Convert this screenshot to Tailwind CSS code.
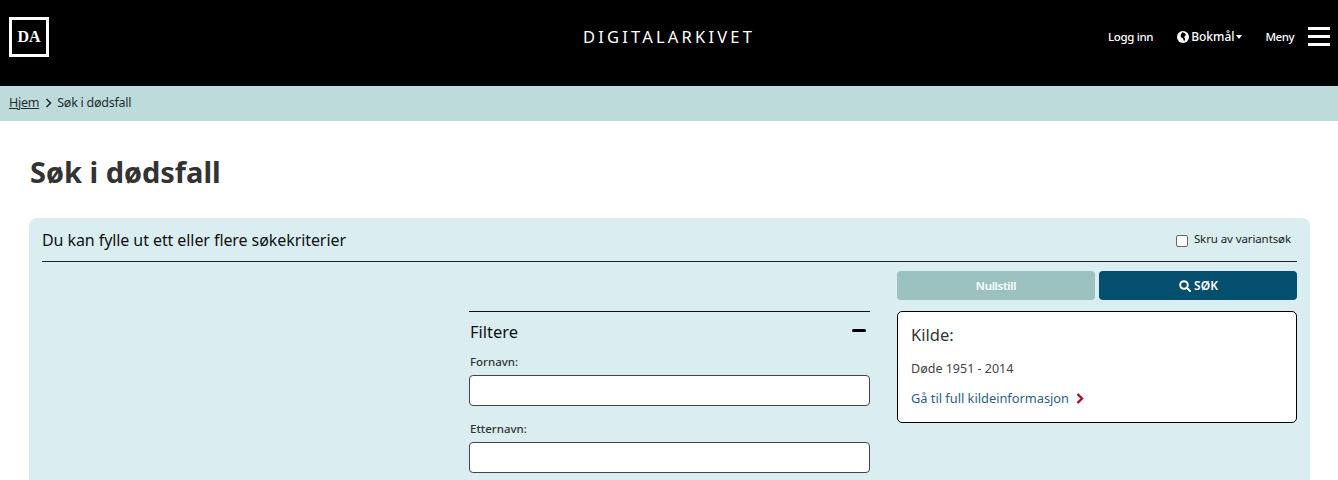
<!DOCTYPE html>
<html lang="nb">
<head>
  <meta charset="utf-8">
  <title>Søk i dødsfall</title>
  <script src="https://cdn.jsdelivr.net/npm/@tailwindcss/browser@4"></script>
</head>
<body class="bg-white font-['Noto_Sans',sans-serif] text-[#333] h-[480px] overflow-hidden">
  <header class="bg-black h-[86px] grid grid-cols-[1fr_auto_1fr] items-center text-white">
    <div class="ml-[9px] mb-[12px] w-[40px] h-[40px] border-[3px] border-white flex items-center justify-center font-['Liberation_Serif',serif] font-bold text-[16px]">DA</div>
    <div class="text-center text-[16.5px] tracking-[3.2px] mb-[11px]">DIGITALARKIVET</div>
    <nav class="flex items-center justify-end text-[12px] mb-[13px] font-medium">
      <a class="mr-[24px] text-[11.5px] tracking-[-0.35px]">Logg inn</a>
      <svg class="w-[12px] h-[12px] mr-[2px]" viewBox="0 0 16 16"><circle cx="8" cy="8" r="8" fill="#fff"/><path d="M7 1.5 10 2.5 12 5 9.5 8 11 10.5 9.5 14 8 10 5 8 5 5Z" fill="#000"/></svg>
      <a>Bokmål</a>
      <span class="ml-[1px] mr-[24px] w-0 h-0 border-x-[3.5px] border-x-transparent border-t-[4px] border-t-white"></span>
      <a class="mr-[14px] text-[11.5px] tracking-[-0.5px]">Meny</a>
      <div class="w-[22px] mr-[8px] flex flex-col gap-[5px]">
        <span class="block h-[3px] bg-white"></span>
        <span class="block h-[3px] bg-white"></span>
        <span class="block h-[3px] bg-white"></span>
      </div>
    </nav>
  </header>

  <div class="bg-[#bddbdb] h-[35px] flex items-center pl-[9px] text-[12.5px] tracking-[-0.25px] text-[#1f2d33]">
    <a class="underline">Hjem</a>
    <svg class="w-[7px] h-[10px] mx-[5.5px] mb-[1px]" viewBox="0 0 7 10" fill="none" stroke="#1f2d33" stroke-width="1.6"><path d="M1.5 1 5.5 5 1.5 9"/></svg>
    <span>Søk i dødsfall</span>
  </div>

  <main class="pl-[29px] pr-[28px]">
    <h1 class="pl-[1px] pt-[31px] h-[97px] text-[29px] leading-[40px] font-bold text-[#333]">Søk i dødsfall</h1>
    <section class="bg-[#daeef1] rounded-t-[8px] h-[262px] px-[13px]">
      <div class="h-[44px] border-b border-[#222] flex items-center justify-between">
        <p class="text-[16px] tracking-[-0.08px] text-[#111]">Du kan fylle ut ett eller flere søkekriterier</p>
        <label class="flex items-start mr-[6px] text-[11.5px] tracking-[-0.1px] text-[#222] mb-[2px]">
          <input type="checkbox" class="w-[12px] h-[12px] mt-[5px] mr-[6px] appearance-none bg-white border border-[#666] rounded-[2px]">
          Skru av variantsøk
        </label>
      </div>
      <div class="grid grid-cols-[400px_401px_400px] gap-x-[27px]">
        <div></div>
        <div class="pt-[49px]">
          <div class="border-t border-[#111] flex items-center justify-between h-[42px]">
            <span class="pl-[1px] text-[16.5px] text-[#111]">Filtere</span>
            <span class="block w-[14px] h-[3.5px] rounded-[2px] bg-black mr-[4px] mb-[4px]"></span>
          </div>
          <label class="block pl-[1px] text-[11.5px] font-medium text-[#333] leading-[16px] mt-[1px]">Fornavn:</label>
          <input type="text" class="block w-full h-[31px] mt-[5px] bg-white border border-[#444] rounded-[4px]">
          <label class="block pl-[1px] text-[11.5px] font-medium text-[#333] leading-[16px] mt-[15px]">Etternavn:</label>
          <input type="text" class="block w-full h-[31px] mt-[5px] bg-white border border-[#444] rounded-[4px]">
        </div>
        <div class="pt-[9px]">
          <div class="grid grid-cols-2 gap-x-[4px] h-[29px]">
            <button class="bg-[#9bc1c1] text-white text-[11.5px] tracking-[-0.3px] font-semibold rounded-[4px]">Nullstill</button>
            <button class="bg-[#044e6e] text-white text-[12px] font-semibold rounded-[4px] flex items-center justify-center gap-[3px] pl-[1px]">
              <svg class="w-[12px] h-[12px]" viewBox="0 0 12 12" fill="none" stroke="#fff" stroke-width="2"><circle cx="5" cy="5" r="3.8"/><path d="M8 8 11 11" stroke-linecap="round"/></svg>
              SØK
            </button>
          </div>
          <div class="mt-[11px] h-[112px] bg-white border border-black rounded-[5px] px-[13px]">
            <h2 class="text-[16.5px] leading-[22px] pt-[12px] h-[44px] text-[#333]">Kilde:</h2>
            <p class="text-[12.5px] leading-[18px] mt-[4px] text-[#444]">Døde 1951 - 2014</p>
            <a class="flex items-center mt-[11px] text-[12.8px] leading-[18px] text-[#2c5f85]">Gå til full kildeinformasjon
              <svg class="w-[8px] h-[11px] ml-[7px]" viewBox="0 0 8 11" fill="none" stroke="#a50f2d" stroke-width="2.4"><path d="M1.5 1 6 5.5 1.5 10"/></svg>
            </a>
          </div>
        </div>
      </div>
    </section>
  </main>
</body>
</html>
